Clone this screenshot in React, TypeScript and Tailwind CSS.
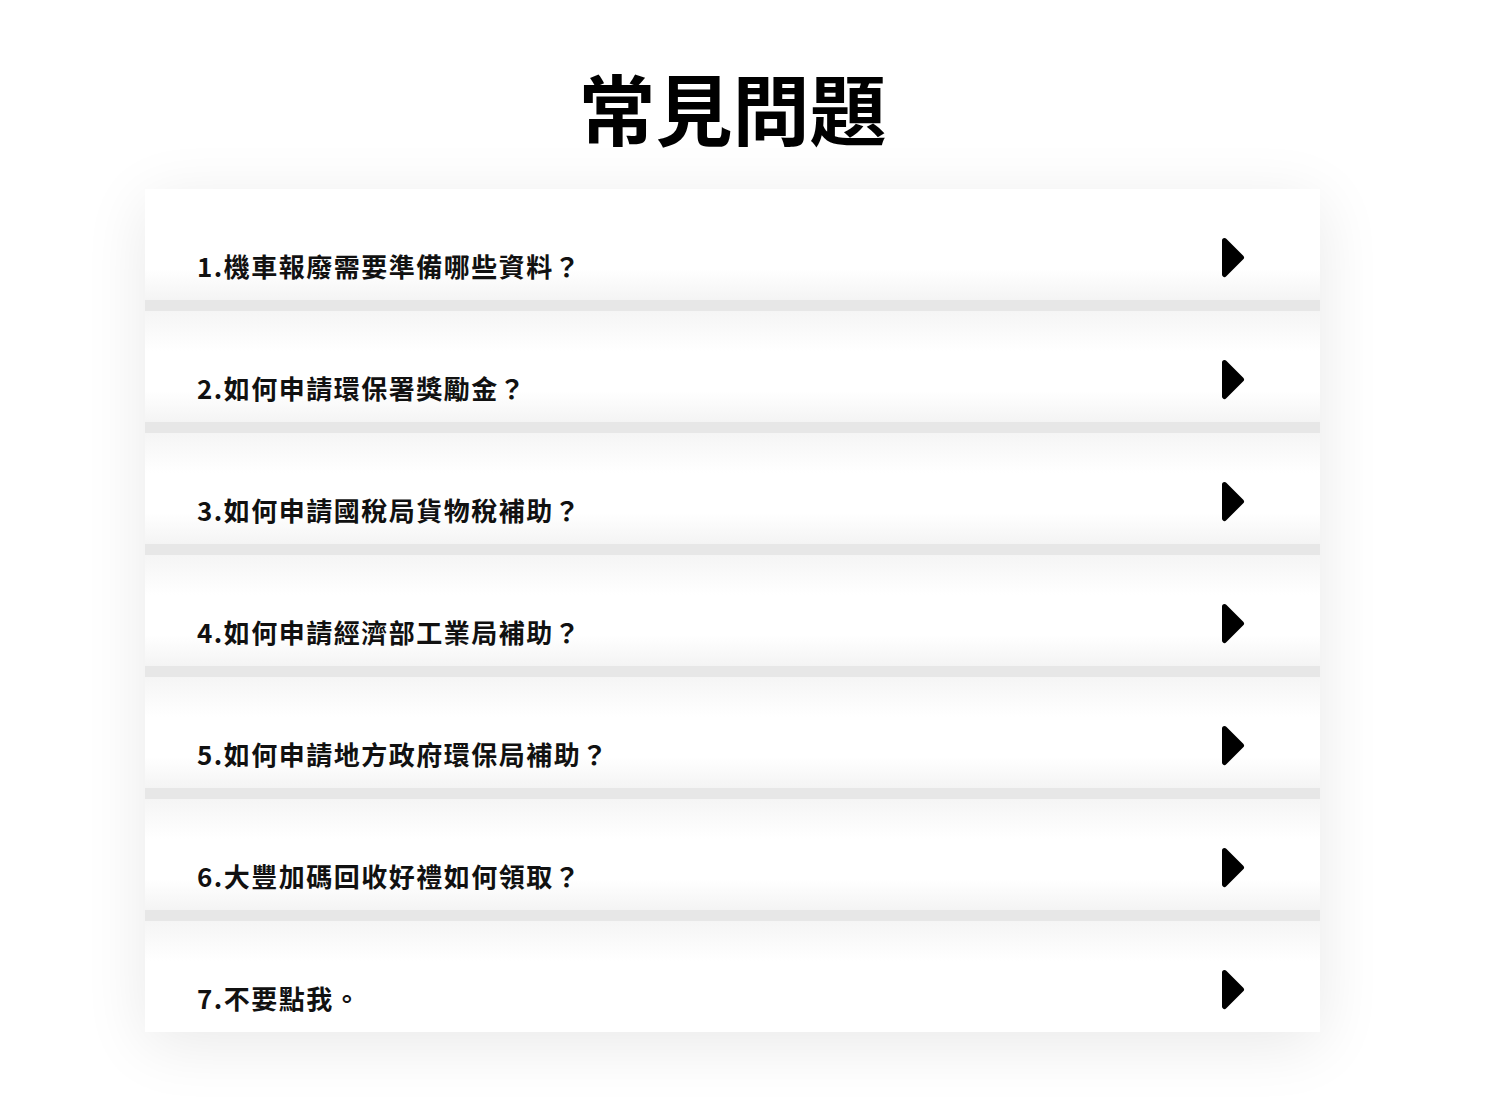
import React from "react";

const items = [
  "1.機車報廢需要準備哪些資料？",
  "2.如何申請環保署獎勵金？",
  "3.如何申請國稅局貨物稅補助？",
  "4.如何申請經濟部工業局補助？",
  "5.如何申請地方政府環保局補助？",
  "6.大豐加碼回收好禮如何領取？",
  "7.不要點我。",
];

function Arrow() {
  return (
    <svg width="24" height="41" viewBox="0 0 24 41" className="shrink-0">
      <polygon
        points="3.5,3.5 20.5,20.5 3.5,37.5"
        fill="#000"
        stroke="#000"
        strokeWidth="5"
        strokeLinejoin="round"
      />
    </svg>
  );
}

export default function App() {
  return (
    <div
      className="min-h-[1103px] bg-white"
      style={{ fontFamily: '"Noto Sans CJK TC", "Noto Sans", sans-serif' }}
    >
      <div className="ml-[145px] w-[1175px] pt-[68px]">
        <h1 className="text-center text-[77px] font-bold leading-none text-black h-[77px]">
          常見問題
        </h1>
        <div className="mt-[44px] flex flex-col gap-[11px] bg-[#e7e7e7] shadow-[0_12px_60px_rgba(0,0,0,0.09)]">
          {items.map((t, i) => {
            const first = i === 0;
            const last = i === items.length - 1;
            const bg = first
              ? "bg-[linear-gradient(to_bottom,#ffffff_0px,#ffffff_80px,#f4f4f4_111px)]"
              : last
              ? "bg-[linear-gradient(to_bottom,#f5f5f5_0px,#ffffff_40px,#ffffff_111px)]"
              : "bg-[linear-gradient(to_bottom,#f5f5f5_0px,#ffffff_40px,#ffffff_80px,#f4f4f4_111px)]";
            return (
              <div
                key={i}
                className={`h-[111px] flex items-start justify-between pl-[52px] pr-[75px] ${bg}`}
              >
                <div className="mt-[59px] text-[26px] leading-[36px] font-semibold tracking-[1.5px] text-[#111]">
                  {t}
                </div>
                <div className="mt-[48px]">
                  <Arrow />
                </div>
              </div>
            );
          })}
        </div>
      </div>
    </div>
  );
}
